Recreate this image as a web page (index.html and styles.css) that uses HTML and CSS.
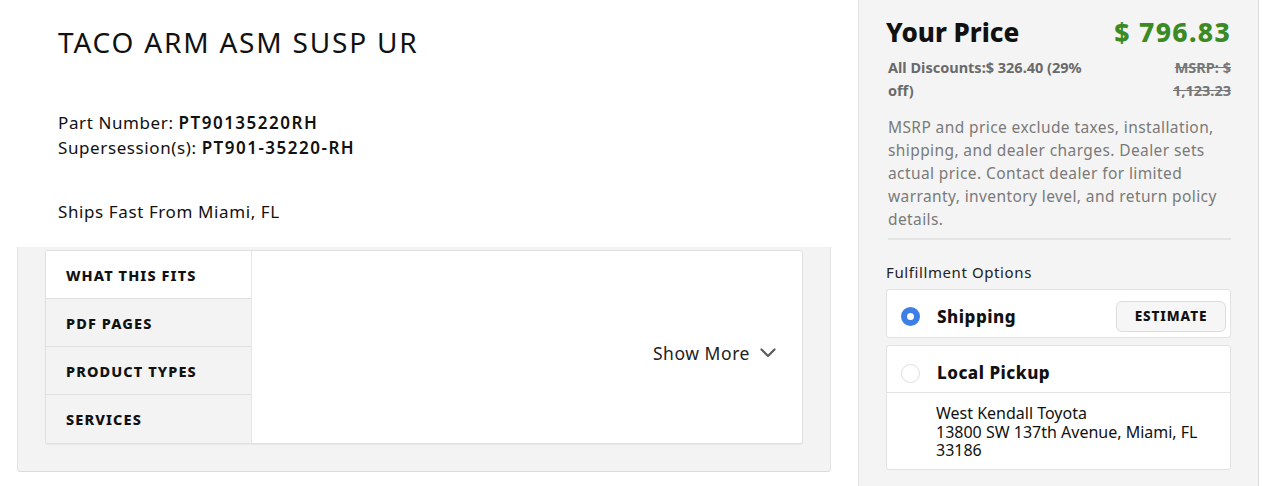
FILE: index.html
```html
<!DOCTYPE html>
<html lang="en">
<head>
<meta charset="utf-8">
<title>TACO ARM ASM SUSP UR</title>
<link rel="stylesheet" href="styles.css">
</head>
<body>
<div class="page">
  <main class="main">
    <div class="info">
      <h1 class="title">TACO ARM ASM SUSP UR</h1>
      <div class="numbers">
        <div>Part Number: <span class="val">PT90135220RH</span></div>
        <div>Supersession(s): <span class="val">PT901-35220-RH</span></div>
      </div>
      <div class="ships">Ships Fast From Miami, FL</div>
    </div>
    <section class="details">
      <div class="card">
        <ul class="tabs">
          <li class="tab active">WHAT THIS FITS</li>
          <li class="tab">PDF PAGES</li>
          <li class="tab">PRODUCT TYPES</li>
          <li class="tab">SERVICES</li>
        </ul>
        <div class="tab-body">
          <button class="show-more">Show More
            <svg class="chev" width="16" height="10" viewBox="0 0 16 10"><path d="M1.5 1.5 L8 8 L14.5 1.5" fill="none" stroke="#5a5a5a" stroke-width="2.2" stroke-linecap="round" stroke-linejoin="round"/></svg>
          </button>
        </div>
      </div>
    </section>
  </main>
  <aside class="side">
    <div class="price-row">
      <span class="your-price">Your Price</span>
      <span class="price">$ 796.83</span>
    </div>
    <div class="disc-row">
      <span class="disc">All Discounts:$ 326.40 (29% off)</span>
      <span class="msrp">MSRP: $ 1,123.23</span>
    </div>
    <p class="disclaimer">MSRP and price exclude taxes, installation, shipping, and dealer charges. Dealer sets actual price. Contact dealer for limited warranty, inventory level, and return policy details.</p>
    <div class="fulfill">
      <div class="fulfill-label">Fulfillment Options</div>
      <div class="opt">
        <div class="opt-head">
          <span class="radio on"></span>
          <span class="opt-name">Shipping</span>
          <button class="estimate">ESTIMATE</button>
        </div>
      </div>
      <div class="opt">
        <div class="opt-head pickup">
          <span class="radio"></span>
          <span class="opt-name">Local Pickup</span>
        </div>
        <div class="address">
          <div class="addr-line">West Kendall Toyota</div>
          <div class="addr-line">13800 SW 137th Avenue, Miami, FL</div>
          <div class="addr-line">33186</div>
        </div>
      </div>
    </div>
  </aside>
</div>
</body>
</html>
```

FILE: styles.css
```css
* { box-sizing: border-box; }
html, body { margin: 0; padding: 0; }
body {
  font-family: "Noto Sans", "Open Sans", sans-serif;
  color: #111;
  background: #fff;
  width: 1279px;
  height: 486px;
  overflow: hidden;
}
.page {
  display: flex;
  align-items: stretch;
  height: 486px;
}
.main {
  width: 858px;
  flex: none;
}
.info {
  padding: 24px 0 0 58px;
}
.title {
  margin: 0;
  font-size: 28px;
  font-weight: 400;
  letter-spacing: 1.8px;
  line-height: 36px;
  color: #111;
}
.numbers {
  margin-top: 50px;
  font-size: 17px;
  line-height: 25px;
  letter-spacing: 0.6px;
  color: #111;
}
.val { font-weight: 600; letter-spacing: 1.5px; }
.ships {
  margin-top: 39px;
  font-size: 17px;
  line-height: 25px;
  letter-spacing: 0.6px;
}
.details {
  margin: 23px 27px 0 17px;
  background: #f3f3f3;
  border-left: 1px solid #e2e2e2;
  border-right: 1px solid #e2e2e2;
  border-bottom: 1px solid #dcdcdc;
  border-radius: 0 0 3px 3px;
  padding: 3px 27px 27px 27px;
}
.card {
  display: flex;
  background: #fff;
  border: 1px solid #e0e0e0;
  border-radius: 3px;
  height: 194px;
  box-shadow: 0 1px 1px rgba(0,0,0,0.05);
  overflow: hidden;
}
.tabs {
  list-style: none;
  margin: 0;
  padding: 0;
  width: 206px;
  flex: none;
  display: flex;
  flex-direction: column;
  border-right: 1px solid #e6e6e6;
}
.tab {
  height: 48px;
  display: flex;
  align-items: center;
  padding-left: 20px;
  font-size: 14.5px;
  font-weight: 800;
  letter-spacing: 1.1px;
  background: #f3f3f3;
  border-top: 1px solid #e0e0e0;
  color: #111;
}
.tab:first-child { border-top: none; height: 47px; }
.tab.active { background: #fff; }
.tabs .tab:last-child { flex: 1; }
.tab-body {
  flex: 1;
  display: flex;
  align-items: center;
  justify-content: flex-end;
  padding-right: 26px;
}
.show-more {
  font-family: inherit;
  background: none;
  border: none;
  padding: 0;
  font-size: 17.5px;
  letter-spacing: 0.55px;
  color: #222;
  display: flex;
  align-items: center;
  gap: 10px;
  margin-top: 12px;
}
.chev { display: block; }
.side {
  width: 401px;
  flex: none;
  background: #f4f4f4;
  border-left: 1px solid #e3e3e3;
  border-right: 1px solid #dcdcdc;
  padding: 14px 27px 0 27px;
}
.price-row {
  display: flex;
  justify-content: space-between;
  align-items: baseline;
  line-height: 36px;
}
.your-price {
  font-size: 26px;
  font-weight: 800;
  color: #111;
}
.price {
  font-size: 26.5px;
  font-weight: 800;
  color: #3b8a23;
  letter-spacing: 1.3px;
}
.disc-row {
  display: flex;
  justify-content: space-between;
  margin-top: 6px;
  font-size: 14.5px;
  font-weight: 700;
  line-height: 23px;
  color: #6a6a6a;
}
.disc { width: 200px; padding-left: 2px; }
.msrp {
  width: 66px;
  text-align: right;
  text-decoration: line-through;
  color: #777;
}
.disclaimer {
  margin: 14px 0 0 2px;
  font-size: 15.5px;
  line-height: 23px;
  letter-spacing: 0.4px;
  color: #7a7a7a;
  padding-bottom: 7px;
  border-bottom: 2px solid #e4e4e4;
}
.fulfill-label {
  margin-top: 22px;
  font-size: 15px;
  letter-spacing: 0.6px;
  color: #222;
  line-height: 20px;
}
.opt {
  margin-top: 7px;
  background: #fff;
  border: 1px solid #e2e2e2;
  border-radius: 3px;
}
.opt + .opt { margin-top: 7px; }
.opt-head {
  height: 47px;
  display: flex;
  align-items: center;
  padding: 6px 4px 0 14px;
}
.opt-head.pickup { border-bottom: 1px solid #e2e2e2; height: 47px; padding-top: 6px; }
.radio {
  width: 19px;
  height: 19px;
  border-radius: 50%;
  border: 1px solid #dedede;
  background: #fff;
  flex: none;
}
.pickup .radio { margin-top: 3px; }
.radio.on {
  border: 6px solid #3d7fe6;
  background: #fff;
}
.opt-name {
  margin-left: 17px;
  font-size: 17px;
  font-weight: 800;
  letter-spacing: 0.5px;
  color: #111;
  flex: 1;
}
.estimate {
  font-family: inherit;
  width: 110px;
  height: 31px;
  margin-bottom: 1px;
  background: #f6f6f7;
  border: 1px solid #dcdcdc;
  border-radius: 6px;
  font-size: 13.5px;
  font-weight: 800;
  letter-spacing: 0.9px;
  color: #111;
  padding: 0;
}
.address {
  padding: 11px 8px 9px 49px;
  font-size: 16px;
  color: #111;
}
.addr-line {
  height: 18.5px;
  line-height: 18.5px;
}
```
